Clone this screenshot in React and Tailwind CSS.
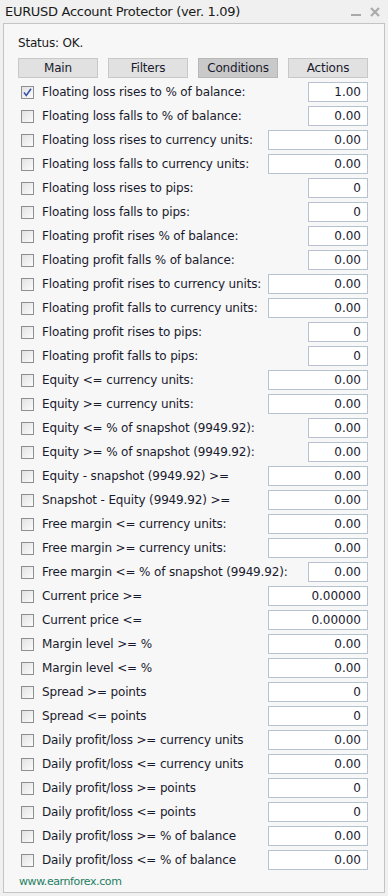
import React from "react";

const rows = [
  ["Floating loss rises to % of balance:", "1.00", "n", true],
  ["Floating loss falls to % of balance:", "0.00", "n"],
  ["Floating loss rises to currency units:", "0.00", "w"],
  ["Floating loss falls to currency units:", "0.00", "w"],
  ["Floating loss rises to pips:", "0", "n"],
  ["Floating loss falls to pips:", "0", "n"],
  ["Floating profit rises % of balance:", "0.00", "n"],
  ["Floating profit falls % of balance:", "0.00", "n"],
  ["Floating profit rises to currency units:", "0.00", "w"],
  ["Floating profit falls to currency units:", "0.00", "w"],
  ["Floating profit rises to pips:", "0", "n"],
  ["Floating profit falls to pips:", "0", "n"],
  ["Equity <= currency units:", "0.00", "w"],
  ["Equity >= currency units:", "0.00", "w"],
  ["Equity <= % of snapshot (9949.92):", "0.00", "n"],
  ["Equity >= % of snapshot (9949.92):", "0.00", "n"],
  ["Equity - snapshot (9949.92) >=", "0.00", "w"],
  ["Snapshot - Equity (9949.92) >=", "0.00", "w"],
  ["Free margin <= currency units:", "0.00", "w"],
  ["Free margin >= currency units:", "0.00", "w"],
  ["Free margin <= % of snapshot (9949.92):", "0.00", "n"],
  ["Current price >=", "0.00000", "w"],
  ["Current price <=", "0.00000", "w"],
  ["Margin level >= %", "0.00", "w"],
  ["Margin level <= %", "0.00", "w"],
  ["Spread >= points", "0", "w"],
  ["Spread <= points", "0", "w"],
  ["Daily profit/loss >= currency units", "0.00", "w"],
  ["Daily profit/loss <= currency units", "0.00", "w"],
  ["Daily profit/loss >= points", "0", "w"],
  ["Daily profit/loss <= points", "0", "w"],
  ["Daily profit/loss >= % of balance", "0.00", "w"],
  ["Daily profit/loss <= % of balance", "0.00", "w"],
];

function Checkbox({ checked }) {
  return (
    <div className="w-[13px] h-[13px] border border-[#8e8f8f] bg-gradient-to-br from-[#e2e2e2] to-[#fbfbfb] flex items-center justify-center shrink-0">
      {checked && (
        <svg width="9" height="9" viewBox="0 0 9 9">
          <path d="M1 4.5 L3.3 7.5 L8 0.8" fill="none" stroke="#3a54a8" strokeWidth="1.6" />
        </svg>
      )}
    </div>
  );
}

export default function App() {
  const font = { fontFamily: '"DejaVu Sans", Tahoma, sans-serif' };
  return (
    <div className="w-[388px] h-[896px] bg-[#f0f0f0] flex flex-col overflow-hidden" style={font}>
      <div className="h-[23px] flex items-center pl-[5px] pr-[8px] text-[13px] text-[#1a1a1a]">
        <span className="flex-1 tracking-[-0.3px]">EURUSD Account Protector (ver. 1.09)</span>
        <div className="flex items-center gap-[9px] mt-[1px]">
          <div className="w-[10px] h-[2px] bg-[#a8a8a8] mt-[6px]" />
          <svg width="10" height="10" viewBox="0 0 10 10">
            <path d="M1 1 L9 9 M9 1 L1 9" stroke="#ababab" strokeWidth="2.2" />
          </svg>
        </div>
      </div>
      <div className="ml-[3px] w-[382px] h-[870px] border border-[#c4c4c4] bg-[#f7f7f7] flex flex-col pl-[14px] pr-[16px] pt-[11px]">
        <div className="h-[17px] leading-[17px] text-[12px] text-[#1a1a1a] tracking-[-0.2px]">Status: OK.</div>
        <div className="mt-[6px] flex gap-[10px] h-[20px] text-[12px] text-[#1a1a2e]">
          {["Main", "Filters", "Conditions", "Actions"].map((t) => (
            <div
              key={t}
              className={
                "w-[80px] h-[20px] flex items-center justify-center border tracking-[-0.2px] " +
                (t === "Conditions" ? "bg-[#c9c9c9] border-[#b8b8b8]" : "bg-[#e1e1e1] border-[#c8c8c8]")
              }
            >
              {t}
            </div>
          ))}
        </div>
        <div className="mt-[2px] flex flex-col">
          {rows.map(([label, val, kind, checked], i) => (
            <div key={i} className="h-[24px] flex items-center pl-[3px] text-[12px] text-[#1a1a2e]">
              <Checkbox checked={checked} />
              <span className="ml-[8px] flex-1 whitespace-nowrap tracking-[-0.15px]">{label}</span>
              <div
                className={
                  "h-[20px] border border-[#b6c2d0] bg-white flex items-center justify-end pr-[6px] text-[12px] text-[#1a1a2e] " +
                  (kind === "w" ? "w-[100px]" : "w-[60px]")
                }
              >
                {val}
              </div>
            </div>
          ))}
        </div>
        <div className="mt-[2px] text-[11px] text-[#1e7e62] tracking-[-0.4px] pl-[1px]">www.earnforex.com</div>
      </div>
    </div>
  );
}
